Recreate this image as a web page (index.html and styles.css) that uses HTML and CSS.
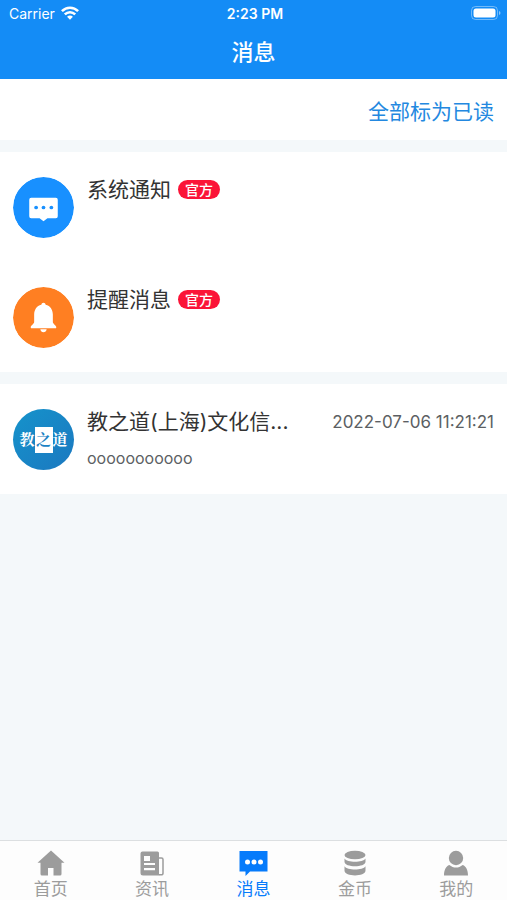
FILE: index.html
```html
<!DOCTYPE html>
<html lang="zh-CN">

<head>
  <meta charset="utf-8">
  <meta name="viewport" content="width=device-width, initial-scale=1">
  <title>消息</title>
  <link rel="stylesheet" href="styles.css">
</head>

<body>

  <header class="header">
    <div class="status">
      <div class="carrier">
        <span>Carrier</span>
        <svg width="18" height="14" viewBox="0 0 18 14" fill="none" stroke="#fff" stroke-width="2.6">
          <path d="M0.9 5.2C5.5 .6 12.5 .6 17.1 5.2"/>
          <path d="M3.8 8.4c3-2.9 7.4-2.9 10.4 0"/>
          <path d="M6.1 10.8c1.7-1.600 4.1-1.600 5.8 0L9 13.700z" fill="#fff" stroke="none"/>
        </svg>
      </div>
      <span class="clock">2:23 PM</span>
      <svg class="battery" width="30" height="14" viewBox="0 0 30 14">
        <rect x=".5" y=".5" width="26" height="13" rx="4" fill="none" stroke="#fff" stroke-opacity=".4"/>
        <rect x="2.500" y="2.500" width="22" height="9" rx="2.500" fill="#fff"/>
        <path d="M28 5v4c2-.8 2-3.200 0-4z" fill="#fff" fill-opacity=".5"/>
      </svg>
    </div>
    <h1 class="title">消息</h1>
  </header>

  <main class="main">
    <div class="toolbar">
      <button class="read-all" type="button">全部标为已读</button>
    </div>

    <section class="group">
      <a class="row" href="#system">
        <svg class="avatar" viewBox="0 0 62 62">
          <circle cx="31" cy="31" r="31" fill="#1890ff"/>
          <path d="M18.500 21h25a2 2 0 0 1 2 2v17a2 2 0 0 1-2 2H35l-4 3-4-3h-8.500a2 2 0 0 1-2-2V23a2 2 0 0 1 2-2z" fill="#fff"/>
          <g fill="#1890ff">
            <circle cx="23.500" cy="31" r="1.900"/>
            <circle cx="31" cy="31" r="1.900"/>
            <circle cx="39" cy="31" r="1.900"/>
          </g>
        </svg>
        <div class="info">
          <div class="line">
            <span class="name">系统通知</span>
            <span class="badge">官方</span>
          </div>
        </div>
      </a>
      <a class="row" href="#remind">
        <svg class="avatar" viewBox="0 0 62 62">
          <circle cx="31" cy="31" r="31" fill="#ff7f22"/>
          <path d="M31 16c1.300 0 2 .8 2.200 2 4.800 1.200 7.300 5 7.300 10v7.500c0 1.800 3.500 3.700 3.500 5.300 0 .8-.5 1.200-1.300 1.200H19.300c-.8 0-1.300-.4-1.300-1.200 0-1.600 3.500-3.500 3.500-5.300V28c0-5 2.500-8.800 7.300-10 .2-1.200.9-2 2.200-2zM27.800 43h6.400c-.3 4-6.100 4-6.400 0z" fill="#fff"/>
        </svg>
        <div class="info">
          <div class="line">
            <span class="name">提醒消息</span>
            <span class="badge">官方</span>
          </div>
        </div>
      </a>
    </section>

    <section class="group">
      <a class="row" href="#chat">
        <div class="avatar logo"><span>教</span><span class="logo-mid">之</span><span>道</span></div>
        <div class="info">
          <div class="line">
            <span class="name">教之道(上海)文化信...</span>
            <time class="time" datetime="2022-07-06T11:21:21">2022-07-06 11:21:21</time>
          </div>
          <p class="preview">ooooooooooo</p>
        </div>
      </a>
    </section>
  </main>

  <nav class="tabs">
    <a class="tab" href="#home">
      <svg viewBox="0 0 30 26" fill="currentColor">
        <path d="M15 .5 1.500 12.700h3V24A1.500 1.500 0 0 0 6 25.500h6V18h5.500v7.500H24a1.500 1.500 0 0 0 1.500-1.500V12.700h3z"/>
      </svg>
      <span>首页</span>
    </a>
    <a class="tab" href="#news">
      <svg viewBox="0 0 30 26" fill="currentColor">
        <path fill-rule="evenodd" d="M5.500 1.500h15A1.500 1.500 0 0 1 22 3v21.500a1.500 1.500 0 0 0 .4 1H6A2.500 2.500 0 0 1 3.500 23V3.500a2 2 0 0 1 2-2zM7 6v5h6V6zm0 7v2h11v-2zm0 5v2.200h11V18z"/>
        <path d="M22 8h2.500A1.500 1.500 0 0 1 26 9.500v13.700c0 1.200-.8 1.600-2 1.600h-2" fill="none" stroke="currentColor" stroke-width="1.500"/>
      </svg>
      <span>资讯</span>
    </a>
    <a class="tab active" href="#message">
      <svg viewBox="0 0 30 26">
        <path d="M.5 1h28v20.500H11L6.500 26v-4.500h-6z" fill="currentColor"/>
        <g fill="#fff">
          <circle cx="8.500" cy="12" r="2.500"/>
          <circle cx="15" cy="12" r="2.500"/>
          <circle cx="21.500" cy="12" r="2.500"/>
        </g>
      </svg>
      <span>消息</span>
    </a>
    <a class="tab" href="#coin">
      <svg viewBox="0 0 30 26" fill="currentColor">
        <ellipse cx="15" cy="5" rx="10.500" ry="4.300"/>
        <path d="M4.500 8.500c2.500 4.300 18.500 4.300 21 0v3.200c0 6-21 6-21 0z"/>
        <path d="M4.500 16.200c2.500 4.300 18.500 4.300 21 0v4.300c0 6.500-21 6.500-21 0z"/>
      </svg>
      <span>金币</span>
    </a>
    <a class="tab" href="#mine">
      <svg viewBox="0 0 30 26" fill="currentColor">
        <circle cx="15" cy="8" r="7.200"/>
        <path d="M8.300 14.900c4.200 3.400 9.200 3.400 13.400 0 3.500 1.300 5.300 5.100 5.300 10.600H3c0-5.500 1.800-9.300 5.300-10.600z"/>
      </svg>
      <span>我的</span>
    </a>
  </nav>

</body>

</html>
```
FILE: styles.css
```css
* {
  box-sizing: border-box;
}

body {
  display: flex;
  flex-direction: column;
  min-height: 100vh;
  margin: 0;
  background-color: #f4f8fa;
  color: #333;
  font-family: Inter, "Noto Sans CJK SC", sans-serif;
}

a {
  color: inherit;
  text-decoration: none;
}

.header {
  height: 79px;
  background-color: #148cf6;
  color: #fff;
}

.status {
  display: grid;
  grid-template-columns: 1fr auto 1fr;
  align-items: center;
  height: 26px;
  padding: 0 6px 0 9px;
  font-size: 14px;
}

.carrier {
  display: flex;
  align-items: center;
  gap: 6px;
}

.clock {
  font-weight: 600;
}

.battery {
  justify-self: end;
}

.title {
  margin: 0;
  font-size: 22px;
  font-weight: 500;
  line-height: 52px;
  text-align: center;
}

.main {
  flex: 1;
}

.toolbar {
  display: flex;
  justify-content: flex-end;
  height: 61px;
  padding: 0 13px;
  background-color: #fff;
}

.read-all {
  padding: 0;
  border: none;
  background: none;
  color: #2388e0;
  font-family: inherit;
  font-size: 21px;
}

.group {
  margin-top: 12px;
  background-color: #fff;
}

.row {
  display: flex;
  gap: 13px;
  height: 110px;
  padding: 25px 13px 24px;
}

.avatar {
  flex: none;
  width: 61px;
  height: 61px;
  border-radius: 50%;
}

.logo {
  display: flex;
  align-items: center;
  justify-content: center;
  background: linear-gradient(135deg, #1593cb, #1b78c0);
  color: #fff;
  font-family: "Liberation Serif", "Noto Serif CJK SC", "Noto Sans CJK SC", serif;
  font-size: 15px;
  font-weight: 700;
  line-height: 26px;
}

.logo-mid {
  width: 18px;
  background-color: #fff;
  color: #1b82c4;
  text-align: center;
}

.info {
  flex: 1;
  min-width: 0;
}

.line {
  display: flex;
  align-items: center;
  height: 25px;
}

.name {
  font-size: 21px;
  line-height: 25px;
  white-space: nowrap;
}

.badge {
  margin-left: 7px;
  padding: 0 7px;
  border-radius: 10px;
  background-color: #fb1438;
  color: #fff;
  font-size: 14px;
  font-weight: 500;
  line-height: 19px;
}

.time {
  margin-left: auto;
  color: #5c5f63;
  font-size: 17px;
}

.preview {
  margin: 13px 0 0;
  color: #5c5f63;
  font-size: 16px;
  line-height: 22px;
}

.tabs {
  display: flex;
  height: 60px;
  border-top: 1px solid #dcdfe1;
  background-color: #fdfdfd;
}

.tab {
  display: flex;
  flex: 1;
  flex-direction: column;
  align-items: center;
  gap: 2px;
  padding-top: 9px;
  color: #9c9c9c;
  font-size: 17px;
  line-height: 22px;
}

.tab svg {
  flex: none;
  width: 30px;
  height: 26px;
}

.active {
  color: #067bfb;
}
```
